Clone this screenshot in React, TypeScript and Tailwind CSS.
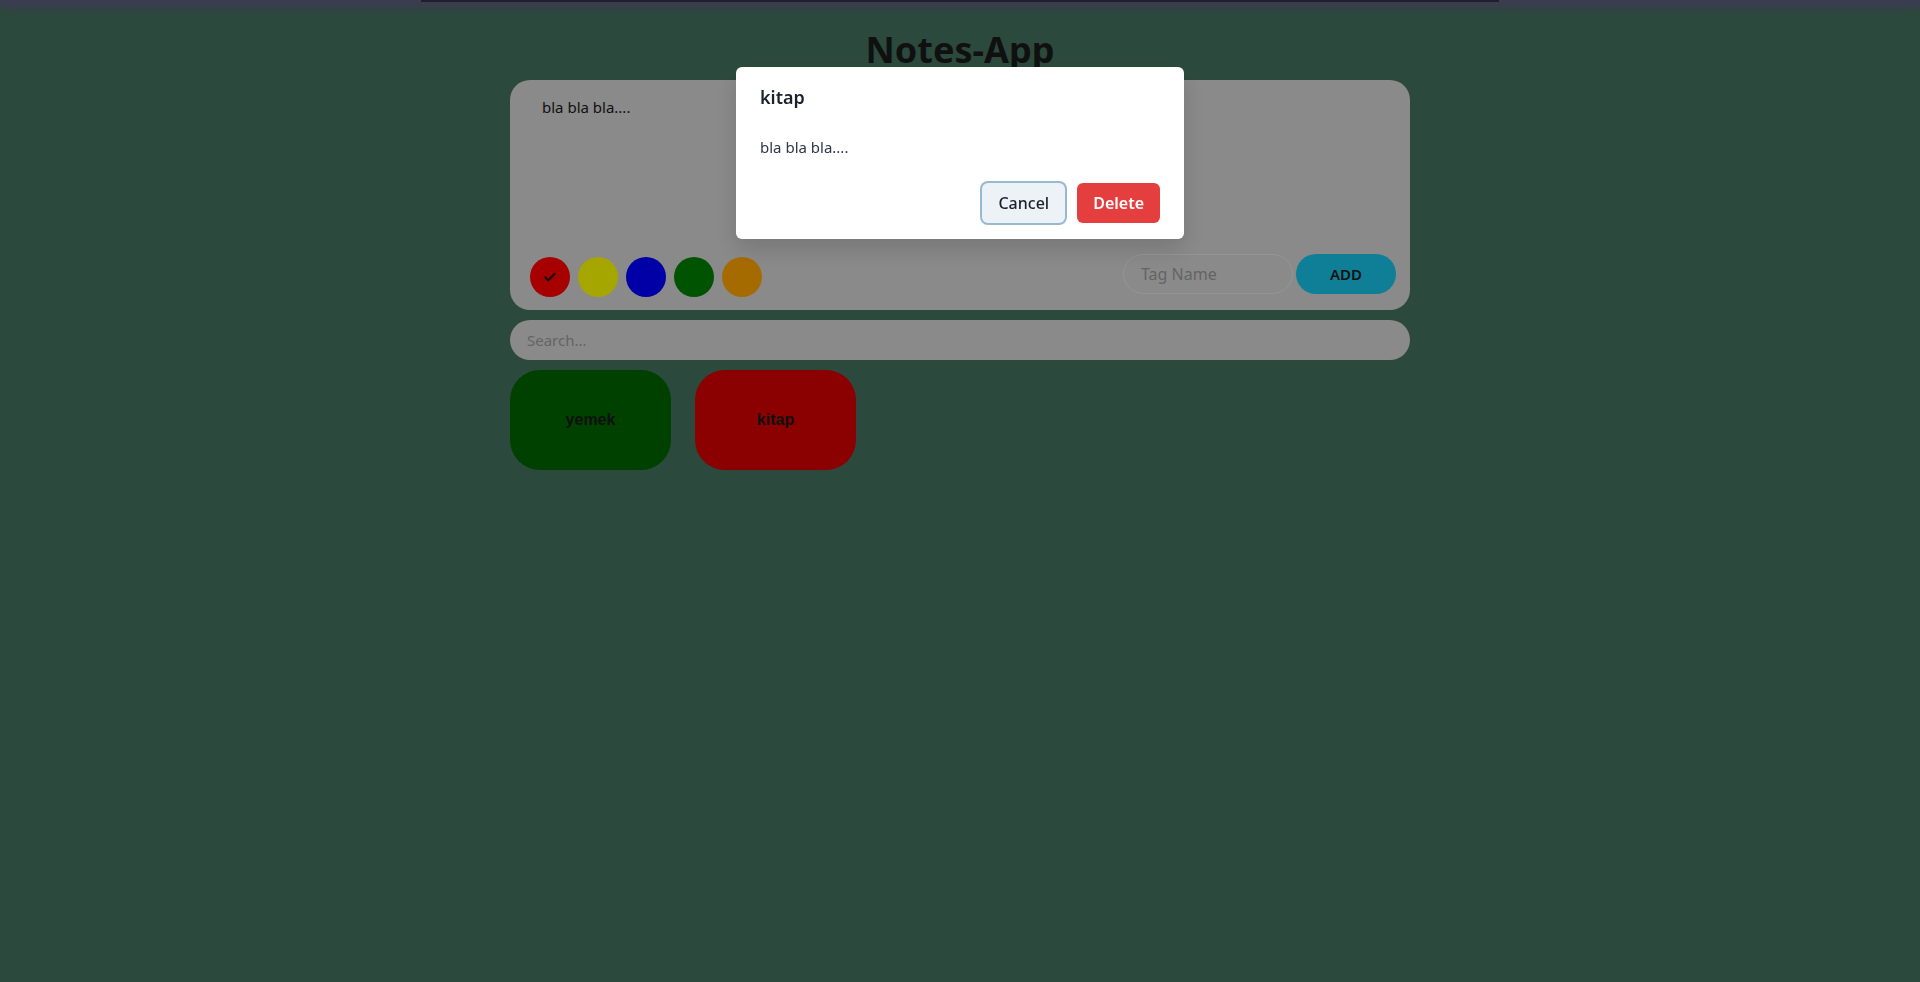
import { useState } from 'react'

type Note = { id: number; title: string; text: string; color: string }

const palette = [
  { name: 'red', cls: 'bg-[#ff0000]' },
  { name: 'yellow', cls: 'bg-[#ffff00]' },
  { name: 'blue', cls: 'bg-[#0000ff]' },
  { name: 'green', cls: 'bg-[#008000]' },
  { name: 'orange', cls: 'bg-[#ffa500]' },
]

const noteBg: Record<string, string> = {
  green: 'bg-[#006400]',
  red: 'bg-[#d60000]',
}

// App: a small notes board. The delete confirmation for "kitap" is open,
// so the whole page sits behind a dimming overlay.
export default function App() {
  const [text, setText] = useState('bla bla bla....')
  const [color, setColor] = useState('red')
  const [notes] = useState<Note[]>([
    { id: 1, title: 'yemek', text: 'bla bla bla....', color: 'green' },
    { id: 2, title: 'kitap', text: 'bla bla bla....', color: 'red' },
  ])
  const [pending, setPending] = useState<Note | null>(notes[1])

  return (
    <div className="min-h-screen bg-[#43715d] font-['Noto_Sans','Open_Sans',sans-serif] text-[#1a1a1a]">
      <div className="flex h-[6px] justify-center bg-[#595c7a] shadow-[0_3px_8px_#595c7a]">
        <div className="h-[2px] w-[1078px] bg-[#303044]" />
      </div>

      <div className="mx-auto w-[900px] pt-[24px]">
        <h1 className="text-center text-[36px] font-bold leading-10 text-[#1a1a1a]">Notes-App</h1>

        <div className="mt-[10px] flex h-[230px] flex-col rounded-[20px] bg-[#d4d4d4] pb-[13px] pl-5 pr-[14px] pt-[15px]">
          <textarea
            value={text}
            onChange={(e) => setText(e.target.value)}
            className="flex-1 resize-none bg-transparent pl-3 text-[15px] leading-6 text-[#1a1a1a] outline-none"
          />
          <div className="flex h-[44px] justify-between">
            <div className="flex gap-2 self-end">
              {palette.map((c) => (
                <button
                  key={c.name}
                  onClick={() => setColor(c.name)}
                  className={`flex h-10 w-10 items-center justify-center rounded-full ${c.cls}`}
                >
                  {color === c.name && (
                    <svg width="14" height="14" viewBox="0 0 24 24" fill="none" stroke="#1a1a1a" strokeWidth="3.5" strokeLinecap="round" strokeLinejoin="round">
                      <path d="M4 12.5l5 5L20 6.5" />
                    </svg>
                  )}
                </button>
              ))}
            </div>
            <div className="flex gap-[3px] self-start pt-[1px]">
              <input
                placeholder="Tag Name"
                className="h-10 w-[170px] rounded-full border border-[#e4e4e4] bg-transparent px-[17px] text-[16px] placeholder:text-[#9a9a9a] outline-none"
              />
              <button className="h-10 w-[100px] rounded-full bg-[#17c3e8] text-[15px] font-semibold text-[#1a1a1a]">
                ADD
              </button>
            </div>
          </div>
        </div>

        <input
          placeholder="Search..."
          className="mt-[10px] h-10 w-full rounded-full bg-[#d4d4d4] px-[17px] text-[15px] placeholder:text-[#9a9a9a] outline-none"
        />

        <div className="mt-[10px] flex gap-6">
          {notes.map((n) => (
            <button
              key={n.id}
              onClick={() => setPending(n)}
              className={`flex h-[100px] w-[161px] items-center justify-center rounded-[30px] font-['Liberation_Sans',Arial,sans-serif] text-[16px] font-bold text-[#1a1a1a] ${noteBg[n.color]}`}
            >
              {n.title}
            </button>
          ))}
        </div>
      </div>

      {pending && (
        <>
          <div className="fixed inset-0 z-40 bg-black/35" />
          <div className="fixed inset-0 z-50 flex justify-center pt-[67px]">
            <div className="h-fit w-[448px] rounded-md bg-white shadow-[0_10px_25px_rgba(0,0,0,0.15)]">
              <div className="px-6 py-4 text-[18px] font-semibold leading-7 text-[#1a202c]">{pending.title}</div>
              <div className="px-6 py-2 text-[15px] leading-6 text-[#2d3748]">{pending.text}</div>
              <div className="flex justify-end gap-3 px-6 py-4">
                <button
                  onClick={() => setPending(null)}
                  className="h-10 rounded-md bg-[#edf2f7] px-4 text-[16px] font-medium text-[#1a202c] shadow-[0_0_0_2px_#98b9d3]"
                >
                  Cancel
                </button>
                <button
                  onClick={() => setPending(null)}
                  className="h-10 rounded-md bg-[#e53e3e] px-4 text-[16px] font-semibold text-white"
                >
                  Delete
                </button>
              </div>
            </div>
          </div>
        </>
      )}
    </div>
  )
}
